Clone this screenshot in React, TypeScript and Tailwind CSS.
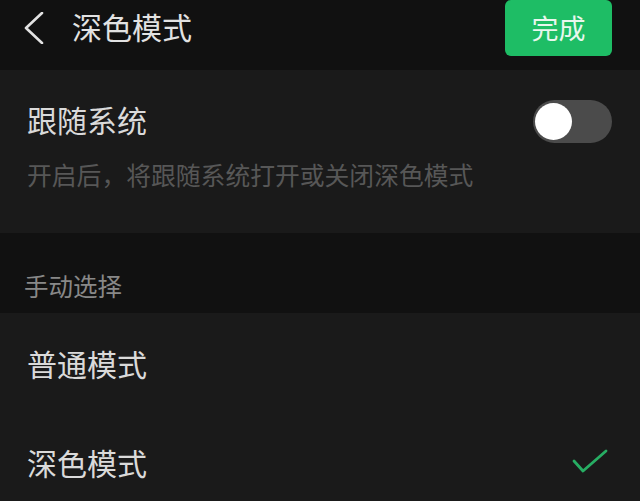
import { useState } from 'react';

const FONT = { fontFamily: '"Noto Sans CJK SC", "Noto Sans", sans-serif' };

export default function App() {
  const [followSystem, setFollowSystem] = useState(false);
  const [mode, setMode] = useState<'normal' | 'dark'>('dark');

  return (
    <div className="min-h-[501px] w-full bg-[#1a1a1a] text-[#dadada]" style={FONT}>
      {/* header */}
      <div className="flex h-[70px] items-start justify-between bg-[#111111]">
        <div className="flex h-[56px] items-center">
          <button className="ml-[24px] flex h-[32px] w-[20px] items-center justify-center">
            <svg width="20" height="32" viewBox="0 0 20 32" fill="none">
              <polyline points="18,1 2,16 18,31" stroke="#e2e2e2" strokeWidth="2.6" strokeLinecap="round" strokeLinejoin="round" />
            </svg>
          </button>
          <h1 className="mb-[4px] ml-[28px] text-[30px] leading-[30px] font-normal text-[#e2e2e2]">深色模式</h1>
        </div>
        <button className="mr-[28px] flex h-[56px] w-[107px] items-center justify-center rounded-md bg-[#1ebd65] text-[27px] leading-[30px] text-[#e9f7ee]">
          完成
        </button>
      </div>

      {/* follow system */}
      <div className="h-[163px] bg-[#1a1a1a] px-[27px] pt-[30px]">
        <div className="flex h-[43px] items-center justify-between">
          <span className="mb-[6px] text-[30px] leading-[30px]">跟随系统</span>
          <button
            onClick={() => setFollowSystem(!followSystem)}
            className={`relative mr-[1px] h-[43px] w-[79px] rounded-full ${followSystem ? 'bg-[#1ebd65]' : 'bg-[#4b4b4b]'}`}
          >
            <span className={`absolute top-[3px] h-[37px] w-[37px] rounded-full bg-white ${followSystem ? 'left-[39px]' : 'left-[2px]'}`} />
          </button>
        </div>
        <p className="mt-[16px] text-[24.8px] leading-[30px] text-[#575757]">开启后，将跟随系统打开或关闭深色模式</p>
      </div>

      {/* manual label */}
      <div className="h-[80px] bg-[#111111] pl-[24px] pt-[38px]">
        <span className="text-[24.5px] leading-[30px] text-[#888888]">手动选择</span>
      </div>

      {/* options */}
      <div className="bg-[#1a1a1a]">
        {([['normal', '普通模式'], ['dark', '深色模式']] as const).map(([key, label]) => (
          <div
            key={key}
            onClick={() => setMode(key)}
            className="flex h-[99px] items-center justify-between pl-[27px] pr-[32px]"
          >
            <span className="text-[30px] leading-[30px]">{label}</span>
            {mode === key && (
              <svg width="36" height="26" viewBox="0 0 36 26" fill="none">
                <polyline points="2,12 11,22 34,2" stroke="#27ad63" strokeWidth="2.8" strokeLinecap="round" strokeLinejoin="round" />
              </svg>
            )}
          </div>
        ))}
      </div>
    </div>
  );
}
